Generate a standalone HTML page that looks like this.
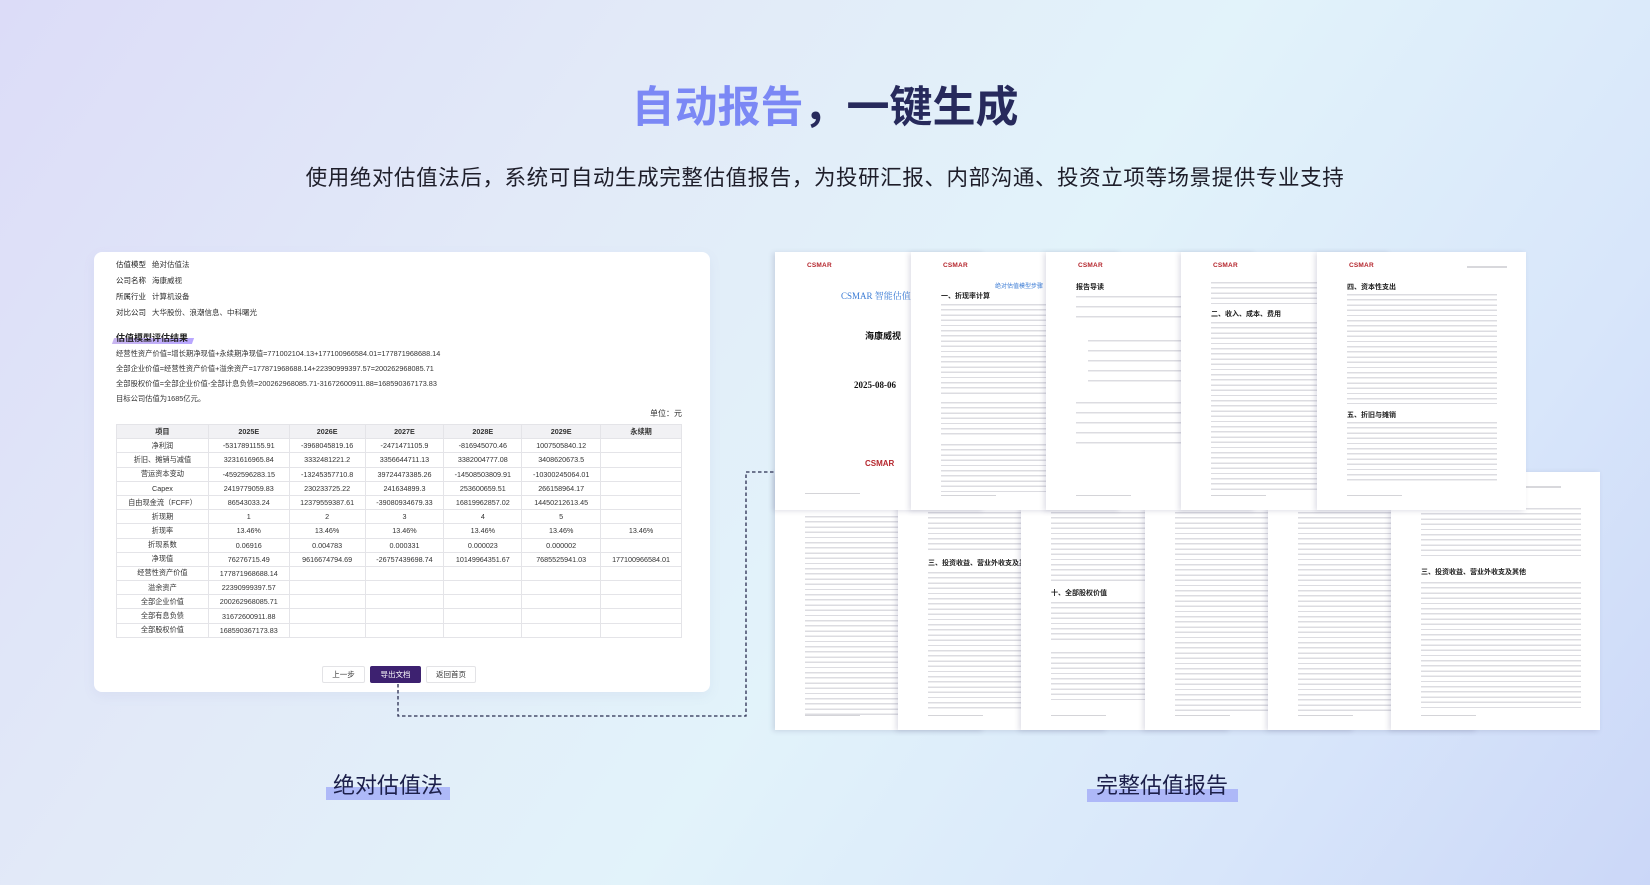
<!DOCTYPE html>
<html><head><meta charset="utf-8"><style>
*{margin:0;padding:0;box-sizing:border-box}
body{width:1650px;height:885px;overflow:hidden;position:relative;font-family:"Liberation Sans","Noto Sans CJK SC",sans-serif;
background:linear-gradient(125deg,#dcdcf8 0%,#e2eaf8 30%,#e2f3fa 55%,#d8e6fa 80%,#cbd7f8 100%);}
.abs{position:absolute}
.title{left:0;width:1650px;top:80px;text-align:center;font-size:43px;font-weight:bold;letter-spacing:0px;line-height:56px}
.title .a{color:#7b88f5}.title .b{color:#272a5c}
.sub{left:0;width:1650px;top:163px;text-align:center;font-size:21.5px;color:#1e1e2a;letter-spacing:0.6px;line-height:30px}
.card{left:94px;top:252px;width:616px;height:440px;background:#fff;border-radius:8px;box-shadow:0 4px 12px rgba(120,120,180,.08)}
.info{position:absolute;left:22px;font-size:7.5px;color:#333;line-height:10px}
.info b{font-weight:normal;color:#222;margin-right:6px}
.hd{position:absolute;left:22px;top:80px;font-size:9px;font-weight:bold;color:#222;line-height:12px}
.hd span{position:relative;z-index:1}
.hd i{position:absolute;left:-3px;right:-5px;top:6px;height:6px;background:linear-gradient(90deg,#c9b6f0,#b9a7ff);transform:skewX(-20deg);z-index:0}
.fm{position:absolute;left:22px;font-size:7.3px;color:#333;line-height:10px;white-space:nowrap}
.unit{position:absolute;right:28px;top:156px;font-size:8px;color:#333}
table{position:absolute;left:22px;top:172px;width:566px;border-collapse:collapse;font-size:7.2px;color:#333}
td,th{border:1px solid #e4e4e8;height:14.2px;text-align:center;font-weight:normal;padding:0;white-space:nowrap}
th{background:#f1f1f4;font-weight:bold;color:#333}
.btn{position:absolute;top:414px;height:17px;font-size:7.5px;line-height:15px;text-align:center;border:1px solid #e3e3e6;background:#fff;color:#333;border-radius:2px}
.page{position:absolute;width:209px;height:258px;background:#fff;box-shadow:-2px 1px 5px rgba(80,80,120,.18);overflow:hidden}
.logo{position:absolute;left:32px;top:10px;font-size:6.5px;font-weight:bold;color:#b5262d;letter-spacing:.2px}
.ln{position:absolute;left:30px;height:2px;background:#d8d8dc}
.tx{position:absolute;left:30px;background:repeating-linear-gradient(180deg,#dcdce1 0 1.4px,transparent 1.4px 5.2px)}
.h1{position:absolute;left:30px;font-size:7px;font-weight:bold;color:#222}
.ft{position:absolute;left:30px;bottom:14px;width:55px;height:1.5px;background:#d4d4d8}
.lab{position:absolute;font-size:22px;color:#1c1f4a;line-height:26px}
.bar{position:absolute;height:13px;background:#a9b3f7;opacity:.9}
</style></head><body>
<div class="abs title"><span class="a">自动报告</span><span class="b">，一键生成</span></div>
<div class="abs sub">使用绝对估值法后，系统可自动生成完整估值报告，为投研汇报、内部沟通、投资立项等场景提供专业支持</div>

<div class="abs card">
<div class="info" style="top:8px"><b>估值模型</b>绝对估值法</div>
<div class="info" style="top:24px"><b>公司名称</b>海康威视</div>
<div class="info" style="top:40px"><b>所属行业</b>计算机设备</div>
<div class="info" style="top:56px"><b>对比公司</b>大华股份、浪潮信息、中科曙光</div>
<div class="hd"><i></i><span>估值模型评估结果</span></div>
<div class="fm" style="top:97px">经营性资产价值=增长期净现值+永续期净现值=771002104.13+177100966584.01=177871968688.14</div>
<div class="fm" style="top:112px">全部企业价值=经营性资产价值+溢余资产=177871968688.14+22390999397.57=200262968085.71</div>
<div class="fm" style="top:127px">全部股权价值=全部企业价值-全部计息负债=200262968085.71-31672600911.88=168590367173.83</div>
<div class="fm" style="top:142px">目标公司估值为1685亿元。</div>
<div class="unit">单位：元</div>
<table>
<colgroup><col style="width:92px"><col style="width:81px"><col style="width:76px"><col style="width:79px"><col style="width:78px"><col style="width:79px"><col style="width:81px"></colgroup>
<tr><th>项目</th><th>2025E</th><th>2026E</th><th>2027E</th><th>2028E</th><th>2029E</th><th>永续期</th></tr>
<tr><td>净利润</td><td>-5317891155.91</td><td>-3968045819.16</td><td>-2471471105.9</td><td>-816945070.46</td><td>1007505840.12</td><td></td></tr>
<tr><td>折旧、摊销与减值</td><td>3231616965.84</td><td>3332481221.2</td><td>3356644711.13</td><td>3382004777.08</td><td>3408620673.5</td><td></td></tr>
<tr><td>营运资本变动</td><td>-4592596283.15</td><td>-13245357710.8</td><td>39724473385.26</td><td>-14508503809.91</td><td>-10300245064.01</td><td></td></tr>
<tr><td>Capex</td><td>2419779059.83</td><td>230233725.22</td><td>241634899.3</td><td>253600659.51</td><td>266158964.17</td><td></td></tr>
<tr><td>自由现金流（FCFF）</td><td>86543033.24</td><td>12379559387.61</td><td>-39080934679.33</td><td>16819962857.02</td><td>14450212613.45</td><td></td></tr>
<tr><td>折现期</td><td>1</td><td>2</td><td>3</td><td>4</td><td>5</td><td></td></tr>
<tr><td>折现率</td><td>13.46%</td><td>13.46%</td><td>13.46%</td><td>13.46%</td><td>13.46%</td><td>13.46%</td></tr>
<tr><td>折现系数</td><td>0.06916</td><td>0.004783</td><td>0.000331</td><td>0.000023</td><td>0.000002</td><td></td></tr>
<tr><td>净现值</td><td>76276715.49</td><td>9616674794.69</td><td>-26757439698.74</td><td>10149964351.67</td><td>7685525941.03</td><td>177100966584.01</td></tr>
<tr><td>经营性资产价值</td><td>177871968688.14</td><td></td><td></td><td></td><td></td><td></td></tr>
<tr><td>溢余资产</td><td>22390999397.57</td><td></td><td></td><td></td><td></td><td></td></tr>
<tr><td>全部企业价值</td><td>200262968085.71</td><td></td><td></td><td></td><td></td><td></td></tr>
<tr><td>全部有息负债</td><td>31672600911.88</td><td></td><td></td><td></td><td></td><td></td></tr>
<tr><td>全部股权价值</td><td>168590367173.83</td><td></td><td></td><td></td><td></td><td></td></tr>
</table>
<div class="btn" style="left:228px;width:43px">上一步</div>
<div class="btn" style="left:276px;width:51px;background:#3d2170;color:#fff;border-color:#3d2170">导出文档</div>
<div class="btn" style="left:332px;width:50px">返回首页</div>
</div>

<svg class="abs" style="left:0;top:0" width="1650" height="885">
<path d="M398 684 V716 H746 V472 H775" fill="none" stroke="#2a2d50" stroke-width="1.3" stroke-dasharray="3.5 2.5"/>
</svg>

<div class="page" style="left:775px;top:472px"><div class="tx" style="top:44px;width:150px;height:200px"></div><div class="ft"></div></div>
<div class="page" style="left:898px;top:472px"><div class="tx" style="top:40px;width:150px;height:40px"></div><div class="h1" style="top:86px">三、投资收益、营业外收支及其他</div><div class="tx" style="top:100px;width:150px;height:140px"></div><div class="ft"></div></div>
<div class="page" style="left:1021px;top:472px"><div class="tx" style="top:40px;width:150px;height:70px"></div><div class="h1" style="top:116px">十、全部股权价值</div><div class="tx" style="top:130px;width:150px;height:40px"></div><div class="tx" style="top:180px;width:150px;height:50px"></div><div class="ft"></div></div>
<div class="page" style="left:1145px;top:472px"><div class="tx" style="top:40px;width:150px;height:200px"></div><div class="ft"></div></div>
<div class="page" style="left:1268px;top:472px"><div class="tx" style="top:40px;width:150px;height:200px"></div><div class="ft"></div></div>
<div class="page" style="left:1391px;top:472px"><div class="ln" style="left:130px;top:14px;width:40px;height:1.5px"></div><div class="tx" style="top:36px;width:160px;height:50px"></div><div class="h1" style="top:95px">三、投资收益、营业外收支及其他</div><div class="tx" style="top:110px;width:160px;height:128px"></div><div class="ft"></div></div>

<div class="page" style="left:775px;top:252px">
<div class="logo">CSMAR</div>
<div class="abs" style="left:66px;top:37px;font-size:9px;color:#3a7bd5;font-family:'Liberation Serif','Noto Serif CJK SC',serif;white-space:nowrap">CSMAR 智能估值报告</div>
<div class="abs" style="left:90px;top:77px;font-size:9px;font-weight:bold;color:#111">海康威视</div>
<div class="abs" style="left:79px;top:128px;font-size:9px;font-weight:bold;color:#111;font-family:'Liberation Serif',serif">2025-08-06</div>
<div class="abs" style="left:90px;top:207px;font-size:8px;font-weight:bold;color:#b5262d">CSMAR</div>
<div class="ft" style="bottom:16px"></div></div>
<div class="page" style="left:911px;top:252px">
<div class="logo">CSMAR</div>
<div class="abs" style="left:84px;top:29px;font-size:6px;color:#3a7bd5">绝对估值模型步骤</div>
<div class="h1" style="top:39px">一、折现率计算</div>
<div class="tx" style="top:52px;width:150px;height:90px"></div>
<div class="tx" style="top:150px;width:150px;height:35px"></div>
<div class="tx" style="top:192px;width:150px;height:50px"></div><div class="ft"></div></div>
<div class="page" style="left:1046px;top:252px">
<div class="logo">CSMAR</div>
<div class="h1" style="top:30px">报告导读</div>
<div class="tx" style="top:44px;width:150px;height:30px;background:repeating-linear-gradient(180deg,#dcdce1 0 1.4px,transparent 1.4px 10px)"></div>
<div class="tx" style="top:88px;left:42px;width:140px;height:50px;background:repeating-linear-gradient(180deg,#dcdce1 0 1.4px,transparent 1.4px 10px)"></div>
<div class="tx" style="top:150px;width:150px;height:45px;background:repeating-linear-gradient(180deg,#dcdce1 0 1.4px,transparent 1.4px 10px)"></div>
<div class="ft"></div></div>
<div class="page" style="left:1181px;top:252px">
<div class="logo">CSMAR</div>
<div class="tx" style="top:30px;width:150px;height:25px"></div>
<div class="h1" style="top:57px">二、收入、成本、费用</div>
<div class="tx" style="top:70px;width:150px;height:170px"></div><div class="ft"></div></div>
<div class="page" style="left:1317px;top:252px">
<div class="logo">CSMAR</div><div class="ln" style="left:150px;top:14px;width:40px;height:1.5px"></div>
<div class="h1" style="top:30px">四、资本性支出</div>
<div class="tx" style="top:42px;width:150px;height:110px"></div>
<div class="h1" style="top:158px">五、折旧与摊销</div>
<div class="tx" style="top:170px;width:150px;height:60px"></div><div class="ft"></div></div>

<div class="bar" style="left:326px;top:787px;width:124px"></div>
<div class="lab" style="left:333px;top:773px">绝对估值法</div>
<div class="bar" style="left:1087px;top:789px;width:151px"></div>
<div class="lab" style="left:1096px;top:773px">完整估值报告</div>
</body></html>
